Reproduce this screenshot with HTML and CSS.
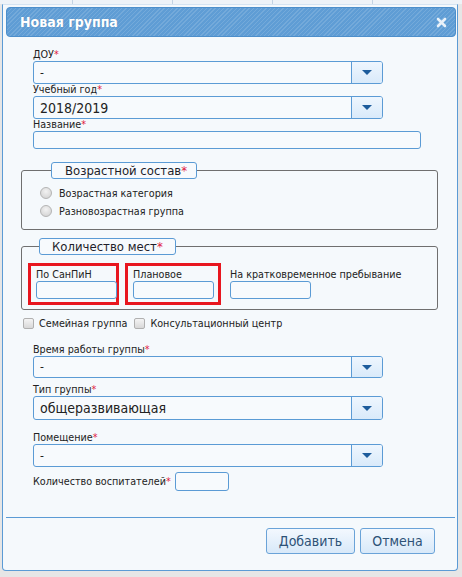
FILE: index.html
```html
<!DOCTYPE html>
<html lang="ru">
<head>
	<meta charset="UTF-8">
	<title>Новая группа</title>
	<link rel="stylesheet" href="styles.css">
</head>
<body>
	<div class="strip"></div>
	<div class="dialog">
		<div class="titlebar">
			<span class="title">Новая группа</span>
			<svg class="close" width="11" height="11" viewBox="0 0 11 11"><path d="M2 2L9 9M9 2L2 9" stroke="#e9f1f9" stroke-width="2.6" stroke-linecap="round"/></svg>
		</div>
		<div class="content">
			<div class="field">
				<div class="lbl">ДОУ<i>*</i></div>
				<div class="select"><span class="val">-</span><span class="btn"><b></b></span></div>
			</div>
			<div class="field">
				<div class="lbl">Учебный год<i>*</i></div>
				<div class="select"><span class="val big">2018/2019</span><span class="btn"><b></b></span></div>
			</div>
			<div class="field">
				<div class="lbl">Название<i>*</i></div>
				<div class="input wide"></div>
			</div>

			<fieldset class="box age">
				<legend>Возрастной состав<i>*</i></legend>
				<div class="radio"><span class="rb"></span>Возрастная категория</div>
				<div class="radio"><span class="rb"></span>Разновозрастная группа</div>
			</fieldset>

			<fieldset class="box places">
				<legend>Количество мест<i>*</i></legend>
				<div class="cells">
					<div class="cell marked first">
						<div class="clbl">По СанПиН</div>
						<div class="input small"></div>
					</div>
					<div class="cell marked second">
						<div class="clbl">Плановое</div>
						<div class="input small"></div>
					</div>
					<div class="cell">
						<div class="clbl">На кратковременное пребывание</div>
						<div class="input small"></div>
					</div>
				</div>
			</fieldset>

			<div class="checks">
				<span class="cb"></span><span class="cbl">Семейная группа</span>
				<span class="cb"></span><span class="cbl">Консультационный центр</span>
			</div>

			<div class="field f-time">
				<div class="lbl">Время работы группы<i>*</i></div>
				<div class="select s-time"><span class="val">-</span><span class="btn"><b></b></span></div>
			</div>
			<div class="field f-type">
				<div class="lbl">Тип группы<i>*</i></div>
				<div class="select s-type"><span class="val big">общеразвивающая</span><span class="btn"><b></b></span></div>
			</div>
			<div class="field f-room">
				<div class="lbl">Помещение<i>*</i></div>
				<div class="select"><span class="val">-</span><span class="btn"><b></b></span></div>
			</div>
			<div class="teachers">
				<span class="lbl">Количество воспитателей<i>*</i></span>
				<div class="input tiny"></div>
			</div>
		</div>
		<div class="footer">
			<div class="button">Добавить</div>
			<div class="button">Отмена</div>
		</div>
	</div>
</body>
</html>
```

FILE: styles.css
```css
*{
	margin: 0;
	padding: 0;
	box-sizing: border-box;
}
body{
	width: 462px;
	height: 577px;
	background: #e6e6e6;
	font-family: "DejaVu Sans Condensed", "DejaVu Sans", sans-serif;
	font-size: 10.7px;
	color: #222;
	overflow: hidden;
}
i{font-style: normal;color: #e0193f;}
.strip{
	height: 4px;
	background: #eef3f8 repeating-linear-gradient(90deg, transparent 0 72px, #c3d3e3 72px 73px, transparent 73px 100px);
}
.dialog{
	margin: 0 4px 0 2px;
	height: 567px;
	background: #f5f9fc;
	border: 1px solid #5b9bd5;
	border-top-color: #d5e4f2;
	border-radius: 0 0 4px 4px;
	padding: 2px 1px 0 3px;
}
.titlebar{
	height: 30px;
	border: 1px solid #4d8fcb;
	border-radius: 4px;
	background: #5f9dd5 repeating-linear-gradient(135deg, rgba(255,255,255,0.13) 0 1px, transparent 1px 3px);
	display: flex;
	align-items: center;
	justify-content: space-between;
	padding: 0 8px 0 13px;
}
.title{
	color: #fff;
	font-weight: bold;
	font-size: 14px;
	text-shadow: 0 0 1px rgba(0,0,0,0.2);
}
.content{
	padding: 12px 0 0 15px;
	height: 480px;
}
.field{
	margin-left: 12px;
}
.lbl{
	line-height: 12px;
	height: 12px;
	white-space: nowrap;
}
.select{
	width: 350px;
	height: 23px;
	border: 1px solid #5b9bd5;
	border-radius: 3px;
	background: #f7fafd;
	display: flex;
	align-items: center;
	justify-content: space-between;
	overflow: hidden;
}
.val{
	padding-left: 6px;
	font-size: 12px;
}
.val.big{
	font-size: 14px;
}
.btn{
	width: 31px;
	height: 100%;
	border-left: 1px solid #5b9bd5;
	background: linear-gradient(#eef6fe, #d9eafa);
	display: flex;
	align-items: center;
	justify-content: center;
}
.btn b{
	width: 0;
	height: 0;
	border-left: 5px solid transparent;
	border-right: 5px solid transparent;
	border-top: 5px solid #1d5c9c;
}
.input{
	height: 18px;
	border: 1px solid #5b9bd5;
	border-radius: 3px;
	background: #f7fafd;
}
.input.wide{width: 388px;}
.input.small{width: 81px;}
.input.tiny{width: 54px;height: 19px;}

.box{
	width: 417px;
	border: 1px solid #6f6f6f;
	border-radius: 3px;
}
.box legend{
	margin-left: 11px;
	border: 1px solid #5b9bd5;
	border-radius: 3px;
	background: #f7fafd;
	height: 17px;
	line-height: 15px;
	font-size: 13px;
	color: #1e1e2a;
}
.age{
	margin-top: 13px;
	height: 68px;
	padding: 5px 0 0 18px;
}
.age legend{
	width: 146px;
	padding-left: 13px;
}
.radio{
	display: flex;
	align-items: center;
	height: 18px;
}
.rb{
	width: 12px;
	height: 12px;
	border-radius: 50%;
	border: 1px solid #b4b4b4;
	background: radial-gradient(circle at 50% 35%, #f2f2f2, #cfcfcf);
	margin-right: 7px;
}
.places{
	margin-top: 8px;
	height: 72px;
	padding: 8px 0 0 6px;
}
.places legend{
	width: 137px;
	padding-left: 12px;
}
.cells{
	display: flex;
}
.cell{
	height: 42px;
	padding: 5px 0 0 0;
}
.cell.marked{
	border: 3px solid #e8161f;
	padding: 2px 0 0 5px;
}
.cell.first{width: 91px;}
.cell.second{width: 96px;margin-left: 6px;margin-right: 9px;}
.clbl{
	height: 13px;
	line-height: 13px;
	white-space: nowrap;
}
.checks{
	margin: 5px 0 0 2px;
	display: flex;
	align-items: center;
	height: 16px;
}
.cb{
	width: 11px;
	height: 11px;
	border: 1px solid #b0b0b0;
	border-radius: 2px;
	background: linear-gradient(#f4f4f4, #d8d8d8);
	margin-right: 5px;
}
.cbl{margin-right: 7px;}
.f-time{margin-top: 13px;}
.s-time{height: 22px;}
.f-type{margin-top: 6px;}
.s-type{height: 24px;}
.f-room{margin-top: 12px;}
.teachers{
	margin: 5px 0 0 12px;
	display: flex;
	align-items: center;
}
.teachers .lbl{margin-right: 4px;height: auto;}
.footer{
	border-top: 1px solid #5b9bd5;
	display: flex;
	justify-content: flex-end;
	padding: 10px 20px 0 0;
	margin-right: 1px;
}
.button{
	height: 26px;
	line-height: 24px;
	border: 1px solid #6aa3d8;
	border-radius: 3px;
	background: linear-gradient(#f3f8fe, #d8e9f9);
	color: #2e5277;
	font-size: 14px;
	text-align: center;
	margin-left: 5px;
}
.button:first-child{width: 89px;}
.button:last-child{width: 75px;}
```
